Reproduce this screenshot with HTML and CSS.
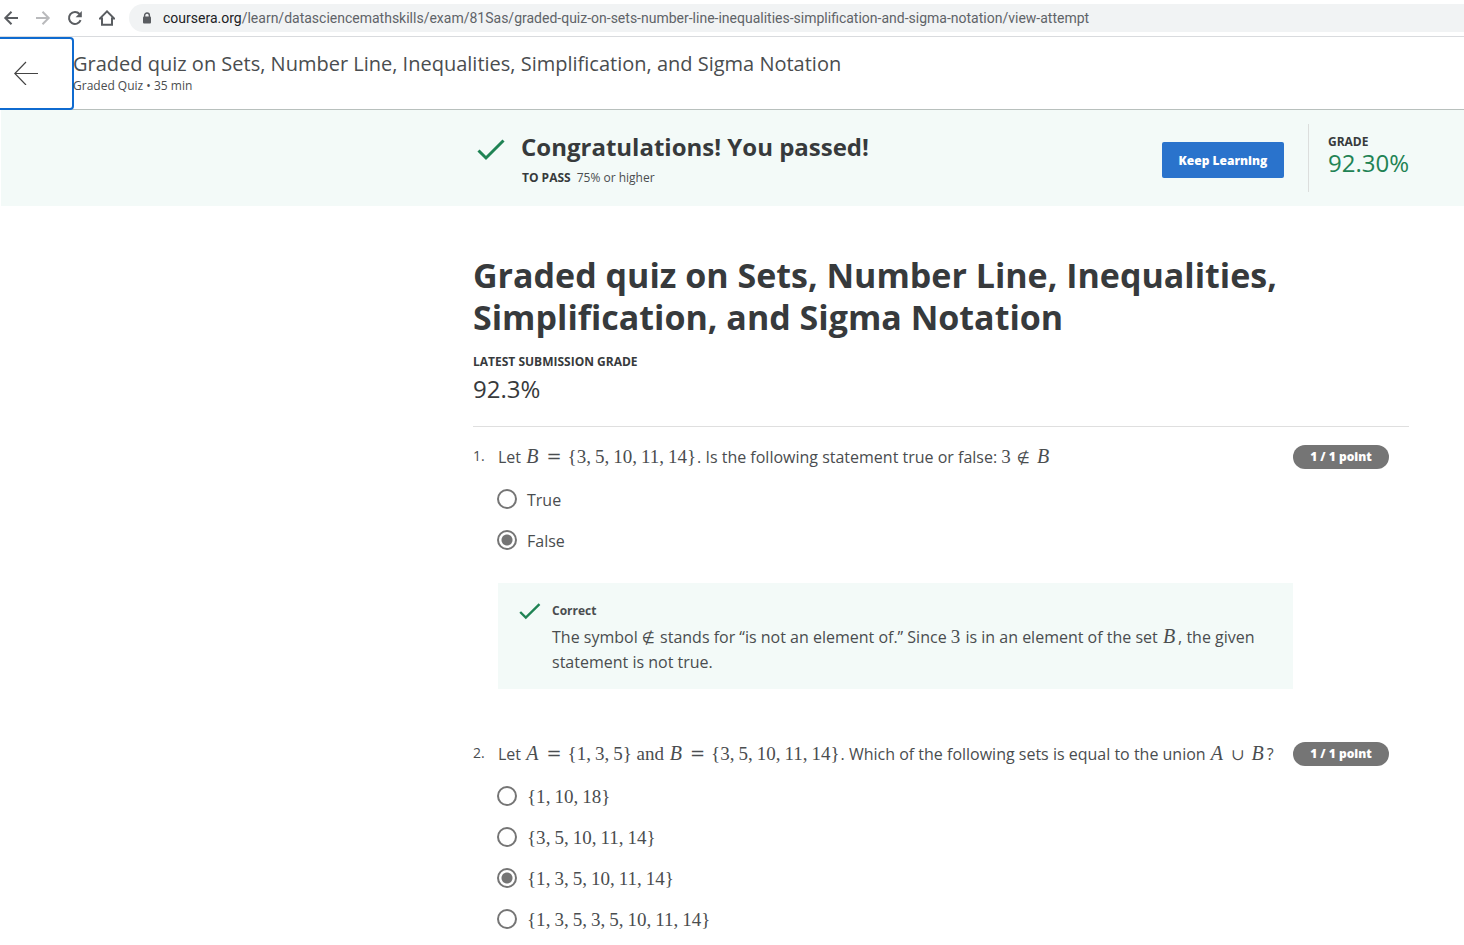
FILE: index.html
```html
<!DOCTYPE html>
<html lang="en">
<head>
<meta charset="utf-8">
<title>Graded quiz</title>
<link rel="stylesheet" href="styles.css">
</head>
<body>
<nav class="toolbar" aria-label="Browser">
  <button class="tool" aria-label="Back"><svg width="16" height="16" viewBox="0 0 16 16"><path d="M15 8H2.5M8.5 1.8L2.3 8l6.2 6.2" stroke="#5a5d61" stroke-width="2" fill="none"/></svg></button>
  <button class="tool" aria-label="Forward"><svg width="16" height="16" viewBox="0 0 16 16"><path d="M1 8h12.5M7.500 1.8L13.700 8l-6.200 6.200" stroke="#b9babc" stroke-width="2" fill="none"/></svg></button>
  <button class="tool" aria-label="Reload"><svg width="16" height="16" viewBox="0 0 16 16"><path d="M13.600 10.200A6 6 0 1 1 12.500 4" stroke="#5a5d61" stroke-width="2" fill="none"/><path d="M14.800 1v6.200H8.600z" fill="#5a5d61"/></svg></button>
  <button class="tool" aria-label="Home"><svg width="16" height="16" viewBox="0 0 16 16"><path d="M.8 8.600L8 1.400l7.200 7.200H13v6.200H3V8.600z" stroke="#5a5d61" stroke-width="2" fill="none"/></svg></button>
  <div class="address">
    <svg width="10" height="12" viewBox="0 0 10 12"><path d="M2.600 5V3.400a2.400 2.400 0 0 1 4.800 0V5" fill="none" stroke="#5a5d61" stroke-width="1.400"/><rect x="1" y="4.500" width="8" height="7" rx="1" fill="#5a5d61"/></svg>
    <span><span class="host">coursera.org</span>/learn/datasciencemathskills/exam/81Sas/graded-quiz-on-sets-number-line-inequalities-simplification-and-sigma-notation/view-attempt</span>
  </div>
</nav>
<header class="header">
  <button class="back" aria-label="Go back"><svg width="24" height="24" viewBox="0 0 24 24"><path d="M24 12.500H1M12 1L.8 12.500 12 24" stroke="#444" stroke-width="1.200" fill="none"/></svg></button>
  <div>
    <div class="header-title">Graded quiz on Sets, Number Line, Inequalities, Simplification, and Sigma Notation</div>
    <div class="header-meta">Graded Quiz • 35 min</div>
  </div>
</header>
<section class="banner">
  <svg class="banner-check" width="28" height="22" viewBox="0 0 28 22"><path d="M1.500 11.500l7.500 7.500L26.500 1.500" stroke="#1f8354" stroke-width="3" fill="none"/></svg>
  <div class="banner-text">
    <h2>Congratulations! You passed!</h2>
    <p><strong>TO PASS</strong>75% or higher</p>
  </div>
  <button class="keep">Keep Learning</button>
  <div class="grade">
    <div class="label">GRADE</div>
    <div class="score">92.30%</div>
  </div>
</section>
<main class="quiz">
  <h1>Graded quiz on Sets, Number Line, Inequalities, Simplification, and Sigma Notation</h1>
  <div class="label">LATEST SUBMISSION GRADE</div>
  <div class="latest">92.3%</div>

  <section class="question first">
    <div class="number">1.</div>
    <div class="body">
      <div class="prompt">Let <span class="math"><i>B</i><b>=</b>{3<s>,</s>5<s>,</s>10<s>,</s>11<s>,</s>14}</span>. Is the following statement true or false: <span class="math">3<b class="notin">∉</b><i>B</i></span></div>
      <label class="option"><input type="radio" name="q1">True</label>
      <label class="option"><input type="radio" name="q1" checked>False</label>
      <div class="feedback">
        <svg width="22" height="17" viewBox="0 0 22 17"><path d="M1.200 9l5.600 5.500L20.500 1.200" stroke="#1f8354" stroke-width="2.400" fill="none"/></svg>
        <div>
          <div class="verdict">Correct</div>
          <p>The symbol <span class="math notin">∉</span> stands for “is not an element of.” Since <span class="math">3</span> is in an element of the set <span class="math"><i>B</i></span>, the given statement is not true.</p>
        </div>
      </div>
    </div>
    <div class="points">1 / 1 point</div>
  </section>

  <section class="question">
    <div class="number">2.</div>
    <div class="body">
      <div class="prompt">Let <span class="math"><i>A</i><b>=</b>{1<s>,</s>3<s>,</s>5} and <i>B</i><b>=</b>{3<s>,</s>5<s>,</s>10<s>,</s>11<s>,</s>14}</span>. Which of the following sets is equal to the union <span class="math"><i>A</i><b class="cup">∪</b><i>B</i></span>?</div>
      <label class="option"><input type="radio" name="q2"><span class="math">{1<s>,</s>10<s>,</s>18}</span></label>
      <label class="option"><input type="radio" name="q2"><span class="math">{3<s>,</s>5<s>,</s>10<s>,</s>11<s>,</s>14}</span></label>
      <label class="option"><input type="radio" name="q2" checked><span class="math">{1<s>,</s>3<s>,</s>5<s>,</s>10<s>,</s>11<s>,</s>14}</span></label>
      <label class="option"><input type="radio" name="q2"><span class="math">{1<s>,</s>3<s>,</s>5<s>,</s>3<s>,</s>5<s>,</s>10<s>,</s>11<s>,</s>14}</span></label>
    </div>
    <div class="points">1 / 1 point</div>
  </section>
</main>
</body>
</html>
```
FILE: styles.css
```css
* { box-sizing: border-box; }
body { margin: 0; background: #fff; color: #373a3c; font: 16px/25px "Open Sans", sans-serif; }
h1, h2, p { margin: 0; }
button { font-family: inherit; border: 0; background: none; padding: 0; }
svg { display: block; flex: none; }

.toolbar { display: flex; align-items: center; gap: 16px; height: 37px; padding-left: 3px; border-bottom: 1px solid #d9dbde; }
.tool { width: 16px; height: 16px; }
.address { display: flex; align-items: center; gap: 11px; flex: 1; height: 28px; margin-left: -2px; padding-left: 13px; border-radius: 14px 0 0 14px; background: #f1f3f4; color: #5f6368; font: 14px/18px Roboto, sans-serif; white-space: nowrap; }
.host { color: #202124; }

.header { display: flex; height: 73px; border-bottom: 1px solid #b8c0bd; color: #4a4d4f; }
.back { display: flex; align-items: center; width: 74px; height: 73px; margin-right: -1px; padding: 0 0 2px 14px; border: 2px solid #0f6bd0; border-left: 0; border-radius: 0 4px 4px 0; }
.header-title { padding-top: 13px; font-size: 20px; line-height: 28px; }
.header-meta { font-size: 12px; line-height: 16px; }

.banner { display: flex; align-items: center; height: 96px; margin-left: 1px; padding: 0 55px 0 476px; background: #f3faf8; }
.banner-check { margin: 0 16px 16px 0; }
.banner-text { flex: 1; padding-top: 2px; }
.banner-text h2 { font-size: 24px; line-height: 32px; }
.banner-text p { margin-top: 6px; padding-left: 1px; font-size: 12px; line-height: 18px; color: #4a4d4f; }
.banner-text strong { margin-right: 6px; font-weight: 700; color: #373a3c; }
.keep { height: 36px; width: 122px; margin: 4px 24px 0 0; border-radius: 2px; background: #2a73cc; color: #fff; font-size: 12px; font-weight: 800; }
.grade { height: 68px; padding: 8px 0 0 19px; border-left: 1px solid #dcdedd; }
.label { font-size: 12px; line-height: 20px; font-weight: 700; }
.score { color: #1f8354; font-size: 24px; line-height: 22px; }

.quiz { padding: 48px 55px 0 473px; }
.quiz h1 { margin-bottom: 14px; font-size: 34px; line-height: 42px; font-weight: 700; }
.latest { padding: 2px 0 22px; border-bottom: 1px solid #dfdfdf; font-size: 24px; line-height: 30px; }

.question { display: grid; grid-template-columns: 24px 1fr 96px; padding-right: 20px; margin-top: 53px; color: #4a4d4f; }
.question.first { margin-top: 18px; }
.number { font-size: 14px; line-height: 22px; }
.prompt { height: 24px; padding-left: 1px; line-height: 24px; white-space: nowrap; }
.option { display: flex; align-items: flex-start; gap: 10px; height: 24px; margin-top: 17px; line-height: 26px; }
.prompt + .option { margin-top: 18px; }
.option input { appearance: none; flex: none; width: 20px; height: 20px; margin: 2px 0 0; border: 2px solid #757575; border-radius: 50%; }
.option input:checked { background: radial-gradient(circle, #757575 5px, #fff 6px); }
.points { height: 24px; border-radius: 12px; background: #757575; color: #fff; font-size: 12px; line-height: 24px; font-weight: 800; text-align: center; }
.feedback { display: flex; gap: 11px; margin: 31px 0 0 1px; padding: 15px 24px 14px 21px; background: #f3faf8; }
.feedback svg { margin-top: 5px; }
.verdict { font-size: 12px; line-height: 26px; font-weight: 700; }
.feedback p { padding-top: 1px; }

.math { padding-right: 1px; font-family: "Liberation Serif", serif; font-size: 19px; line-height: 20px; }
.option .math { line-height: 25px; }
.math s { margin-right: 4px; text-decoration: none; }
.math b { margin: 0 6px; font: 18px/16px "DejaVu Serif", serif; }
.math i { margin: 0 2px 0 1px; font-size: 20px; line-height: 16px; }
.math b.cup { font-size: 16px; }
.math.notin, .math b.notin { font: 15px/16px "DejaVu Sans", sans-serif; }
```
